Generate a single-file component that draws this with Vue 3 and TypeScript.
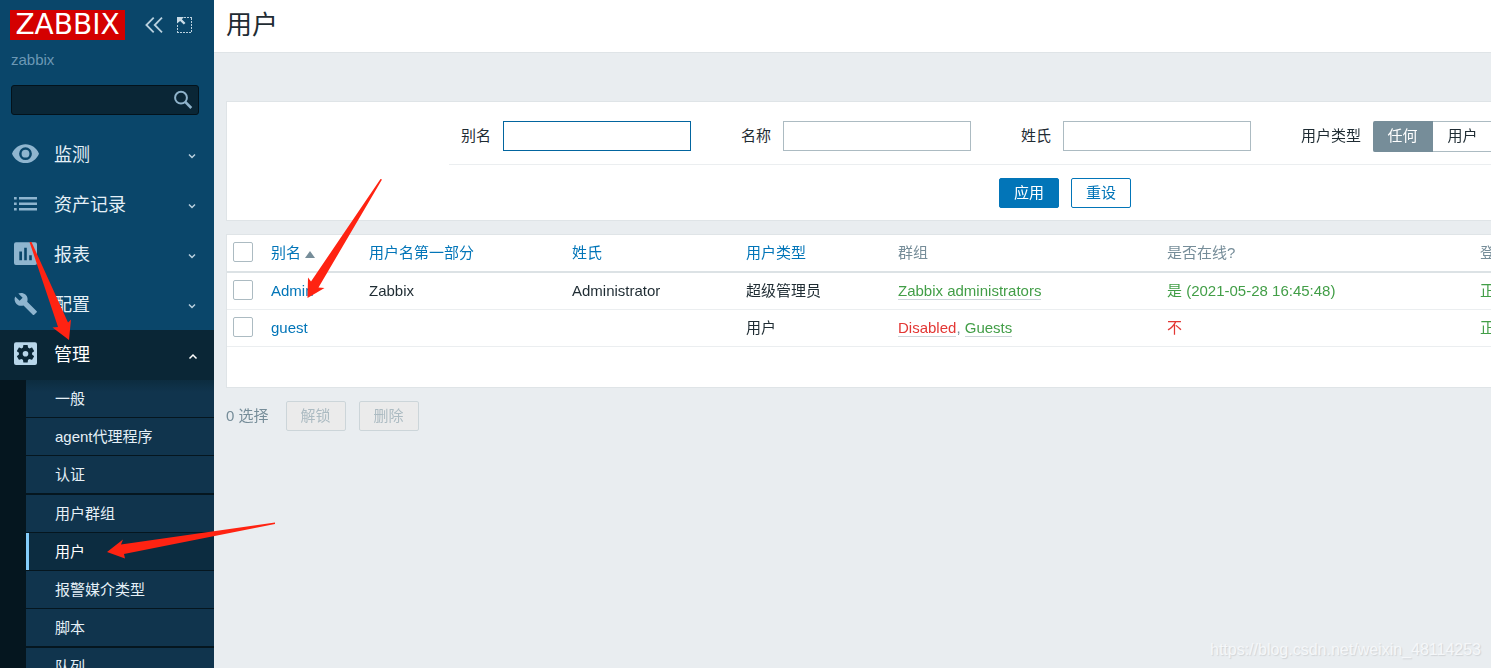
<script setup lang="ts">
import { onMounted, ref } from 'vue'

interface MenuEntry {
  icon: string
  label: string
  open?: boolean
}

const menu: MenuEntry[] = [
  { icon: 'eye', label: '监测' },
  { icon: 'list', label: '资产记录' },
  { icon: 'report', label: '报表' },
  { icon: 'wrench', label: '配置' },
  { icon: 'gear', label: '管理', open: true },
]

const submenu: string[] = ['一般', 'agent代理程序', '认证', '用户群组', '用户', '报警媒介类型', '脚本', '队列']
const current = '用户'

const fields = [
  { id: 'alias', label: '别名' },
  { id: 'name', label: '名称' },
  { id: 'surname', label: '姓氏' },
]
const values = ref<Record<string, string>>({ alias: '', name: '', surname: '' })
const userTypes = ['任何', '用户']
const userType = ref('任何')

interface UserRow {
  alias: string
  name: string
  surname: string
  type: string
  groups: { name: string; disabled?: boolean }[]
  online: string
  isOnline: boolean
  login: string
}

const users: UserRow[] = [
  {
    alias: 'Admin',
    name: 'Zabbix',
    surname: 'Administrator',
    type: '超级管理员',
    groups: [{ name: 'Zabbix administrators' }],
    online: '是 (2021-05-28 16:45:48)',
    isOnline: true,
    login: '正常',
  },
  {
    alias: 'guest',
    name: '',
    surname: '',
    type: '用户',
    groups: [{ name: 'Disabled', disabled: true }, { name: 'Guests' }],
    online: '不',
    isOnline: false,
    login: '正常',
  },
]

const form = ref<HTMLFormElement | null>(null)
onMounted(() => form.value?.querySelector<HTMLInputElement>('#alias')?.focus())
</script>

<template>
  <div class="app">
    <aside class="sidebar">
      <div class="brand">
        <a href="#" class="logo">ZABBIX</a>
        <button type="button" class="icon-btn" aria-label="收起">
          <svg width="20" height="20" viewBox="0 0 20 20" fill="none" stroke="#b9d0de" stroke-width="1.8">
            <path d="M9.7 2.700 2.400 10l7.300 7.300M18 2.700 10.700 10l7.300 7.300" />
          </svg>
        </button>
        <button type="button" class="icon-btn" aria-label="隐藏">
          <svg width="20" height="20" viewBox="0 0 20 20" fill="none" stroke="#b9d0de">
            <path d="M10 2.500h8M17.500 3v14M3.500 10v7M3 17.500h15" stroke-dasharray="2 1" />
            <path d="M3 2h7L7.800 4.200l3.700 3.700-1.700 1.700-3.700-3.700L3 8.500z" fill="#c9dbe6" stroke="none" />
          </svg>
        </button>
      </div>
      <div class="server">zabbix</div>
      <form class="search" role="search" @submit.prevent>
        <input type="text" aria-label="搜索" />
        <button type="submit" aria-label="搜索">
          <svg width="20" height="20" viewBox="0 0 20 20" fill="none" stroke="#8fb3cb">
            <circle cx="8" cy="7.700" r="5.900" stroke-width="2" />
            <path d="m12 11.700 6.300 6.300" stroke-width="2.600" />
          </svg>
        </button>
      </form>
      <nav>
        <ul class="menu">
          <li v-for="m in menu" :key="m.icon">
            <a href="#" class="menu-item" :class="{ open: m.open }">
              <svg class="menu-icon" width="28" height="28" viewBox="0 0 28 28" fill="currentColor">
                <template v-if="m.icon === 'eye'">
                  <path fill-rule="evenodd" d="M13.500 3.300C7.500 3.300 2.300 7 0 12.700c2.300 5.700 7.500 9.400 13.500 9.400S24.700 18.400 27 12.700C24.700 7 19.500 3.300 13.500 3.300zm0 15.800a6.400 6.400 0 1 1 0-12.800 6.400 6.400 0 0 1 0 12.800z" />
                  <circle cx="13.500" cy="12.700" r="3.900" />
                </template>
                <path v-else-if="m.icon === 'list'" d="M2 6h2.700v2.600H2zM7 6h18v2.600H7zM2 11.500h2.700v2.600H2zM7 11.500h18v2.600H7zM2 17h2.700v2.600H2zM7 17h18v2.600H7z" />
                <path v-else-if="m.icon === 'report'" fill-rule="evenodd" d="M4 1.300h19a2 2 0 0 1 2 2V22a2 2 0 0 1-2 2H4a2 2 0 0 1-2-2V3.300a2 2 0 0 1 2-2zM7.300 10.500v8.800H10v-8.800zM12.200 6.700v12.600h2.600V6.700zM17.200 14.300v5h2.600v-5z" />
                <path v-else-if="m.icon === 'wrench'" transform="translate(1.500 .8)" d="m23 19.300-9.300-9.300c.9-2.400.4-5.100-1.500-7C10.200 1 7.200.6 4.800 1.700l4.300 4.300-3 3L1.700 4.700C.5 7.100 1 10.100 3 12.100c1.900 1.900 4.600 2.400 7 1.500l9.300 9.300c.4.400 1 .4 1.400 0l2.300-2.300c.5-.4.500-1.100 0-1.300z" />
                <template v-else>
                  <rect x="2" y="1.300" width="23" height="22.700" rx="2" />
                  <path fill="#0a2636" transform="translate(2.940 2.140) scale(.88)" d="M19.430 12.980c.04-.32.070-.64.070-.98s-.03-.66-.07-.98l2.110-1.650c.19-.15.240-.42.120-.64l-2-3.460c-.12-.22-.39-.3-.61-.22l-2.490 1c-.52-.4-1.080-.73-1.690-.98l-.38-2.650C14.460 2.180 14.250 2 14 2h-4c-.25 0-.46.180-.49.420l-.38 2.650c-.61.250-1.170.590-1.690.980l-2.490-1c-.23-.09-.49 0-.61.220l-2 3.460c-.13.220-.07.490.120.640l2.110 1.650c-.04.320-.07.650-.07.980s.03.660.070.980l-2.110 1.650c-.19.150-.24.420-.12.640l2 3.460c.120.220.390.300.610.220l2.490-1c.520.400 1.080.730 1.690.980l.38 2.650c.030.240.240.420.490.420h4c.250 0 .460-.18.490-.42l.38-2.650c.610-.25 1.170-.59 1.690-.98l2.490 1c.230.090.490 0 .610-.22l2-3.460c.120-.22.070-.49-.12-.64l-2.110-1.650zM12 15.200a3.200 3.200 0 1 1 0-6.400 3.200 3.200 0 0 1 0 6.400z" />
                </template>
              </svg>
              <span class="menu-label">{{ m.label }}</span>
              <svg class="chev" width="10" height="12" viewBox="0 0 10 12" fill="none" stroke="currentColor" stroke-width="1.500">
                <path :d="m.open ? 'M1.500 9.500 5 6l3.500 3.500' : 'M1 5.500l3 3 3-3'" />
              </svg>
            </a>
            <ul v-if="m.open" class="submenu">
              <li v-for="s in submenu" :key="s">
                <a href="#" :class="{ current: s === current }">{{ s }}</a>
              </li>
            </ul>
          </li>
        </ul>
      </nav>
    </aside>

    <main class="main">
      <header class="title"><h1>用户</h1></header>
      <div class="page">
        <form ref="form" class="panel filter" @submit.prevent>
          <div class="filter-body">
            <div class="filter-row">
              <div v-for="f in fields" :key="f.id" class="field">
                <label :for="f.id">{{ f.label }}</label>
                <input :id="f.id" v-model="values[f.id]" type="text" autocomplete="off" />
              </div>
              <div class="field" role="radiogroup" aria-labelledby="type-label">
                <span id="type-label">用户类型</span>
                <div class="segments">
                  <label v-for="t in userTypes" :key="t" :class="{ on: t === userType }">
                    <input v-model="userType" type="radio" name="type" :value="t" />{{ t }}
                  </label>
                </div>
              </div>
            </div>
            <div class="filter-actions">
              <button type="submit" class="btn primary">应用</button>
              <button type="reset" class="btn">重设</button>
            </div>
          </div>
        </form>

        <div class="panel list">
          <table>
            <colgroup>
              <col class="c-check" /><col class="c-alias" /><col class="c-name" /><col class="c-surname" />
              <col class="c-type" /><col class="c-groups" /><col class="c-online" /><col />
            </colgroup>
            <thead>
              <tr>
                <th><input type="checkbox" aria-label="全选" /></th>
                <th><a href="#">别名<span class="sort"></span></a></th>
                <th><a href="#">用户名第一部分</a></th>
                <th><a href="#">姓氏</a></th>
                <th><a href="#">用户类型</a></th>
                <th>群组</th>
                <th>是否在线?</th>
                <th>登录</th>
              </tr>
            </thead>
            <tbody>
              <tr v-for="u in users" :key="u.alias">
                <td><input type="checkbox" :aria-label="u.alias" /></td>
                <td><a href="#">{{ u.alias }}</a></td>
                <td>{{ u.name }}</td>
                <td>{{ u.surname }}</td>
                <td>{{ u.type }}</td>
                <td>
                  <template v-for="(g, i) in u.groups" :key="g.name"><template v-if="i">, </template><a href="#" class="group" :class="g.disabled ? 'red' : 'green'">{{ g.name }}</a></template>
                </td>
                <td :class="u.isOnline ? 'green' : 'red'">{{ u.online }}</td>
                <td class="green">{{ u.login }}</td>
              </tr>
            </tbody>
          </table>
        </div>

        <div class="actions">
          <span>0 选择</span>
          <button type="button" class="btn" disabled>解锁</button>
          <button type="button" class="btn" disabled>删除</button>
        </div>
      </div>
    </main>

    <svg class="arrows" width="400" height="600" viewBox="0 0 400 600" fill="#ff2312" aria-hidden="true">
      <path d="M29.500 242h2L68 322.500l3-3L69 340l-16.500-12.500 5.500-.5z" />
      <path d="M380.500 179l1.500.5L318.500 287.500l6 .5L307.500 298l.5-20.500 3 4z" />
      <path d="M275 522.500v1.500L124 554l1 4.500-18-6.500 16-12.500-2 5z" />
    </svg>
    <div class="watermark">https://blog.csdn.net/weixin_48114253</div>
  </div>
</template>

<style>
body {
  overflow: hidden;
}
</style>

<style scoped>
* {
  box-sizing: border-box;
}
.app {
  position: relative;
  display: flex;
  height: 100vh;
  overflow: hidden;
  background: #e9edf0;
  color: #1f2c33;
  font: 15px/20px "Liberation Sans", "Noto Sans CJK SC", sans-serif;
}
a {
  color: #0275b8;
  text-decoration: none;
}
ul {
  margin: 0;
  padding: 0;
  list-style: none;
}
button,
input {
  font: inherit;
}
.sidebar {
  flex: 0 0 214px;
  background: #0a466a;
  overflow: hidden;
}
.brand {
  display: flex;
  align-items: center;
  padding: 10px 0 0 10px;
}
.logo {
  width: 115px;
  margin-right: 19px;
  background: #d40000;
  color: #fff;
  font: 28px/30px "DejaVu Sans", sans-serif;
  text-align: center;
}
.icon-btn {
  display: flex;
  margin-right: 10px;
  padding: 0;
  border: 0;
  background: none;
}
.server {
  margin: 10px 11px 0;
  color: #6c98b5;
}
.search {
  display: flex;
  align-items: center;
  height: 30px;
  margin: 15px 15px 15px 11px;
  padding-right: 5px;
  background: #0a2636;
  border: 1px solid #03121b;
  border-radius: 3px;
}
.search input {
  flex: 1;
  min-width: 0;
  border: 0;
  outline: 0;
  background: none;
  color: #fff;
}
.search button {
  display: flex;
  padding: 0;
  border: 0;
  background: none;
}
.menu-item {
  display: flex;
  align-items: center;
  height: 50px;
  padding: 0 16px 0 12px;
  color: #e5f0f7;
  font-size: 18px;
}
.menu-icon {
  margin-right: 14px;
  color: #8fb5cf;
}
.menu-label {
  flex: 1;
}
.chev {
  color: #b9d0de;
}
.menu-item.open {
  background: #0a2636;
  color: #fff;
}
.open .menu-icon {
  color: #b8d6ea;
}
.open .chev {
  color: #fff;
}
.submenu {
  border-left: 26px solid #05161f;
  background: linear-gradient(#0c2c3f, #10344d 12px);
}
.submenu li {
  border-bottom: 1px solid #05161f;
}
.submenu li:nth-child(4n + 3) {
  border-bottom-width: 2px;
}
.submenu a {
  display: block;
  padding-left: 29px;
  color: #e5f0f7;
  line-height: 37px;
}
.submenu a.current {
  padding-left: 26px;
  border-left: 3px solid #84cdfb;
  background: #0c2c40;
  color: #fff;
}
.main {
  flex: 1;
  min-width: 0;
  overflow: hidden;
}
.title {
  height: 53px;
  padding: 0 12px;
  background: #fff;
  border-bottom: 1px solid #dfe4e7;
}
h1 {
  margin: 0;
  font-size: 26px;
  font-weight: 400;
  line-height: 50px;
}
.page {
  min-width: 1702px;
  padding: 48px 12px 0;
}
.panel {
  background: #fff;
  border: 1px solid #dfe4e7;
}
.filter {
  margin-bottom: 13px;
  padding: 9px 0 12px;
}
.filter-body {
  width: 1232px;
  margin: 0 auto;
}
.filter-row {
  display: flex;
  gap: 50px;
  padding: 10px 12px 12px;
  border-bottom: 1px solid #ebeef0;
}
.field {
  display: flex;
  align-items: flex-start;
  gap: 12px;
  height: 31px;
  line-height: 30px;
}
.field > input {
  width: 188px;
  height: 30px;
  padding: 0 5px;
  border: 1px solid #acbbc2;
  outline: 0;
  background: #fff;
}
.field > input:focus {
  border-color: #02659f;
  caret-color: transparent;
}
.segments {
  display: flex;
}
.segments label {
  display: block;
  width: 60px;
  height: 31px;
  border: 1px solid #acbbc2;
  border-left: 0;
  line-height: 28px;
  text-align: center;
}
.segments label.on {
  background: #768d99;
  border-color: #768d99;
  border-radius: 2px 0 0 2px;
  color: #fff;
}
.segments input {
  position: absolute;
  opacity: 0;
  pointer-events: none;
}
.filter-actions {
  display: flex;
  justify-content: center;
  gap: 12px;
  padding-top: 13px;
}
.btn {
  width: 60px;
  height: 30px;
  padding: 0;
  border: 1px solid #0275b8;
  border-radius: 2px;
  background: #fff;
  color: #0275b8;
  line-height: 28px;
}
.btn.primary {
  background: #0275b8;
  color: #fff;
}
.btn:disabled {
  border-color: #ccd5d9;
  background: #ebebeb;
  color: #acbbc2;
}
.list {
  padding-bottom: 40px;
}
table {
  width: 100%;
  table-layout: fixed;
  border-collapse: separate;
  border-spacing: 0;
}
.c-check { width: 38px; }
.c-alias { width: 98px; }
.c-name { width: 203px; }
.c-surname { width: 174px; }
.c-type { width: 152px; }
.c-groups { width: 269px; }
.c-online { width: 313px; }
th,
td {
  height: 37px;
  padding: 0 6px;
  border-bottom: 1px solid #ebeef0;
  font-weight: 400;
  text-align: left;
  white-space: nowrap;
}
th {
  height: 38px;
  border-bottom: 2px solid #dce2e5;
  color: #768d99;
}
td:nth-child(6) {
  color: #768d99;
}
.sort {
  display: inline-block;
  margin-left: 4px;
  border: 5px solid transparent;
  border-top: 0;
  border-bottom: 7px solid #768d99;
}
input[type="checkbox"] {
  display: block;
  width: 20px;
  height: 20px;
  margin: 0 0 2px;
  appearance: none;
  border: 1px solid #acbbc2;
  border-radius: 2px;
  background: #fff;
}
.green {
  color: #429e47;
}
.red {
  color: #e33734;
}
.group {
  border-bottom: 1px solid #ccd5d9;
}
.actions {
  display: flex;
  align-items: center;
  gap: 13px;
  padding-top: 13px;
  color: #768d99;
}
.actions span {
  margin-right: 4px;
}
.arrows {
  position: absolute;
  left: 0;
  top: 0;
  pointer-events: none;
}
.watermark {
  position: absolute;
  right: 10px;
  bottom: 8px;
  color: #f5f7f9;
  font-size: 16px;
  text-shadow: 1px 1px 1px #d0d4d7;
}
</style>
